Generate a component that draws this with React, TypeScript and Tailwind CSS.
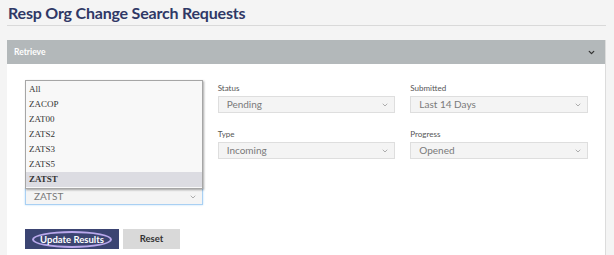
import { ChevronDown } from 'lucide-react';

const sans = { fontFamily: 'Lato, "Open Sans", sans-serif' };

const Select = ({ value, focus }: { value: string; focus?: boolean }) => (
  <div
    className={
      'flex h-[17px] items-center justify-between bg-[#f4f4f4] pl-[8px] pr-[5px] text-[10px] text-[#7a7a7a] ' +
      (focus ? 'border border-[#a9d0f3] shadow-[0_0_2px_#bcdcf7]' : 'border border-[#dedede]')
    }
  >
    <span>{value}</span>
    <ChevronDown size={8} strokeWidth={2} className="text-[#8a8a8a]" />
  </div>
);

const Field = ({ label, value, focus }: { label: string; value: string; focus?: boolean }) => (
  <div className="flex flex-col">
    <div className="mb-[2px] h-[11px] text-[8px] leading-[11px] text-[#555]">{label}</div>
    <Select value={value} focus={focus} />
  </div>
);

const options = ['All', 'ZACOP', 'ZAT00', 'ZATS2', 'ZATS3', 'ZATS5', 'ZATST'];

export default function App() {
  return (
    <div className="h-[255px] w-[614px] overflow-hidden bg-[#f4f4f4]" style={sans}>
      <div className="pl-[7px] pr-[8px]">
        <h1 className="h-[25px] pl-px pt-[3px] text-[16px] font-bold leading-[20px] tracking-[-0.2px] text-[#2f3866]">
          Resp Org Change Search Requests
        </h1>
        <div className="h-px bg-[#d9d9d9]" />
        <div className="mt-[14px] border-r border-[#dcdcdc]">
          <div className="flex h-[24px] items-center justify-between bg-[#b3b8ba] pl-[7px] pr-[9px]">
            <span className="text-[8.5px] font-bold text-white">Retrieve</span>
            <ChevronDown size={9} strokeWidth={3.5} className="text-[#333]" />
          </div>
          <div className="relative h-[200px] bg-white pl-[18px] pr-[17px] pt-[19px]">
            <div className="grid grid-cols-3 gap-x-[15px] gap-y-[16px]">
              <div />
              <Field label="Status" value="Pending" />
              <Field label="Submitted" value="Last 14 Days" />
              <div />
              <Field label="Type" value="Incoming" />
              <Field label="Progress" value="Opened" />
              <Field label="" value="ZATST" focus />
            </div>
            <div className="mt-[24px] flex gap-[4px]">
              <button className="flex h-[20px] w-[94px] items-center justify-center bg-[#3b4472] text-[9.5px] font-bold text-white">
                <span className="rounded-[50%] border-2 border-[#b9a8ec] px-[6px] leading-[13px]">Update Results</span>
              </button>
              <button className="h-[20px] w-[57px] bg-[#d9d9d9] text-[9.5px] font-bold text-[#333]">Reset</button>
            </div>
            <ul
              className="absolute left-[18px] top-[16px] w-[178px] border border-[#a6a6a6] bg-[#f8f8f8] py-px shadow-[1px_1px_2px_rgba(0,0,0,0.35)]"
              style={{ fontFamily: '"Liberation Serif", serif' }}
            >
              {options.map((o) => (
                <li
                  key={o}
                  className={
                    'h-[15px] pl-[3px] text-[9px] leading-[15px] text-[#333] ' +
                    (o === 'ZATST' ? 'bg-[#dcdce2] font-bold' : '')
                  }
                >
                  {o}
                </li>
              ))}
            </ul>
          </div>
        </div>
      </div>
    </div>
  );
}
